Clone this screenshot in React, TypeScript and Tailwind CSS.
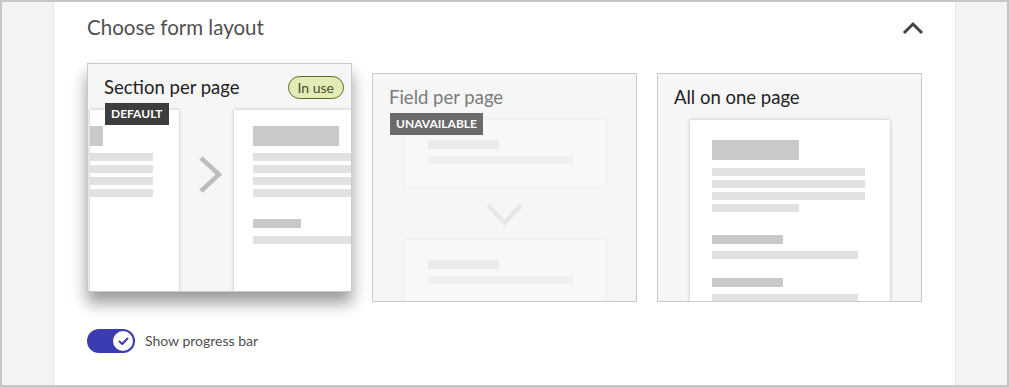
import React from "react";

const Line = ({ w, h = "h-[8px]", c = "bg-[#e1e1e1]" }: { w: string; h?: string; c?: string }) => (
  <div className={`${w} ${h} ${c} shrink-0`} />
);

function SectionPage() {
  return (
    <div className="w-[181px] h-[200px] shrink-0 bg-white shadow-[0_0_4px_rgba(0,0,0,0.22)] pl-[19px] pt-[16px] flex flex-col">
      <div className="w-[86px] h-[20px] bg-[#c9c9c9]" />
      <div className="mt-[7px] flex flex-col gap-[4px]">
        <Line w="w-[136px]" />
        <Line w="w-[136px]" />
        <Line w="w-[136px]" />
        <Line w="w-[136px]" />
      </div>
      <div className="mt-[22px] w-[48px] h-[9px] bg-[#c9c9c9]" />
      <div className="mt-[8px]">
        <Line w="w-[136px]" />
      </div>
    </div>
  );
}

function PrevPage() {
  return (
    <div className="ml-[2px] w-[89px] h-[200px] shrink-0 bg-white shadow-[0_0_4px_rgba(0,0,0,0.22)] overflow-hidden pt-[16px] flex flex-col">
      <div className="-ml-[73px] w-[86px] h-[20px] bg-[#c9c9c9]" />
      <div className="-ml-[73px] mt-[7px] flex flex-col gap-[4px]">
        <Line w="w-[136px]" />
        <Line w="w-[136px]" />
        <Line w="w-[136px]" />
        <Line w="w-[136px]" />
      </div>
    </div>
  );
}

function FieldBox() {
  return (
    <div className="w-[200px] h-[67px] shrink-0 bg-white shadow-[0_0_4px_rgba(0,0,0,0.22)] pl-[23px] pt-[20px] flex flex-col">
      <div className="w-[71px] h-[9px] bg-[#c9c9c9]" />
      <div className="mt-[7px]">
        <Line w="w-[145px]" />
      </div>
    </div>
  );
}

function Card({
  title,
  titleColor,
  badge,
  tag,
  tagBg,
  selected,
  children,
}: {
  title: string;
  titleColor: string;
  badge?: boolean;
  tag?: string;
  tagBg?: string;
  selected?: boolean;
  children: React.ReactNode;
}) {
  return (
    <div
      className={`relative w-[265px] h-[229px] shrink-0 border border-[#cacaca] bg-[#f6f6f6] overflow-hidden flex flex-col ${
        selected ? "-translate-y-[10px] shadow-[0_11px_15px_0px_rgba(0,0,0,0.4)]" : ""
      }`}
    >
      <div className="h-[46px] shrink-0 flex items-center justify-between pl-[16px] pr-[7px]">
        <span className={`text-[18.5px] leading-[24px] ${titleColor}`}>{title}</span>
        {badge && (
          <span className="h-[23px] px-[9px] rounded-full border border-[#65652a] bg-[#e2ecb6] text-[14px] leading-[21px] text-[#4b4b2c]">
            In use
          </span>
        )}
      </div>
      {tag && (
        <div className={`absolute left-[17px] top-[39px] z-10 h-[22px] px-[6px] flex items-center text-[12px] font-bold text-white ${tagBg}`}>
          {tag}
        </div>
      )}
      <div className="flex-1 min-h-0">{children}</div>
    </div>
  );
}

export default function App() {
  return (
    <div className="w-[1009px] h-[387px] border-2 border-[#c6c6c6] bg-[#f3f3f3] flex overflow-hidden font-['Lato',sans-serif]">
      <div className="w-[51px] shrink-0" />
      <div className="w-[903px] shrink-0 bg-white border-x border-[#e6e6e6] pl-[33px] pr-[33px] pt-[11px] flex flex-col">
        <div className="h-[28px] flex items-center justify-between">
          <h2 className="text-[20.5px] leading-[28px] text-[#505050]">Choose form layout</h2>
          <svg width="22" height="14" viewBox="0 0 22 14" className="mr-[-2px] mt-[2px]">
            <polyline points="2,12 11,3 20,12" fill="none" stroke="#444" strokeWidth="3" />
          </svg>
        </div>

        <div className="mt-[32px] flex gap-[20px]">
          <Card title="Section per page" titleColor="text-[#222]" badge tag="DEFAULT" tagBg="bg-[#3d3d3d]" selected>
            <div className="flex items-start">
              <PrevPage />
              <svg width="23" height="37" viewBox="0 0 23 37" className="ml-[20px] mr-[12px] mt-[46px] shrink-0">
                <polyline points="2,2 20,18.5 2,35" fill="none" stroke="#bdbdbd" strokeWidth="4.5" />
              </svg>
              <SectionPage />
            </div>
          </Card>

          <Card title="Field per page" titleColor="text-[#7a7a7a]" tag="UNAVAILABLE" tagBg="bg-[#6b6b6b]">
            <div className="flex flex-col items-center opacity-25">
              <FieldBox />
              <svg width="37" height="23" viewBox="0 0 37 23" className="mt-[16px] mb-[14px]">
                <polyline points="2,2 18.5,20 35,2" fill="none" stroke="#bdbdbd" strokeWidth="4.5" />
              </svg>
              <FieldBox />
            </div>
          </Card>

          <Card title="All on one page" titleColor="text-[#222]">
            <div className="flex justify-center">
              <div className="w-[200px] h-[200px] bg-white shadow-[0_0_4px_rgba(0,0,0,0.22)] pl-[22px] pt-[20px] flex flex-col">
                <div className="w-[87px] h-[20px] bg-[#c9c9c9]" />
                <div className="mt-[8px] flex flex-col gap-[4px]">
                  <Line w="w-[153px]" />
                  <Line w="w-[153px]" />
                  <Line w="w-[153px]" />
                  <Line w="w-[87px]" />
                </div>
                <div className="mt-[23px] w-[71px] h-[9px] bg-[#c9c9c9]" />
                <div className="mt-[7px]">
                  <Line w="w-[146px]" />
                </div>
                <div className="mt-[19px] w-[71px] h-[9px] bg-[#c9c9c9]" />
                <div className="mt-[7px]">
                  <Line w="w-[146px]" />
                </div>
              </div>
            </div>
          </Card>
        </div>

        <div className="mt-[27px] flex items-center gap-[10px]">
          <div className="w-[48px] h-[24px] rounded-full bg-[#3c3cb2] flex items-center justify-end pr-[2px]">
            <div className="w-[20px] h-[20px] rounded-full bg-white flex items-center justify-center">
              <svg width="11" height="9" viewBox="0 0 11 9">
                <polyline points="1.5,4.5 4.2,7 9.5,1.5" fill="none" stroke="#3c3cb2" strokeWidth="2" strokeLinecap="round" strokeLinejoin="round" />
              </svg>
            </div>
          </div>
          <span className="text-[14px] leading-[20px] text-[#505050]">Show progress bar</span>
        </div>
      </div>
      <div className="flex-1" />
    </div>
  );
}
